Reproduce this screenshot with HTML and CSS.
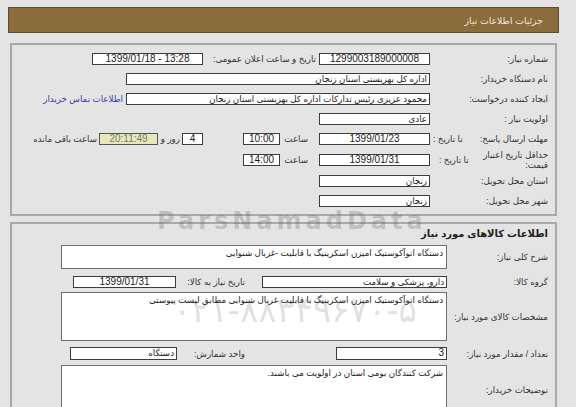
FILE: index.html
```html
<!DOCTYPE html>
<html lang="fa" dir="rtl">
<head>
<meta charset="utf-8">
<title>جزئیات اطلاعات نیاز</title>
<link rel="stylesheet" href="styles.css">
</head>
<body>
<div class="header">جزئیات اطلاعات نیاز</div>

<div class="panel p1">
  <div class="row">
    <div class="lbl">شماره نیاز:</div>
    <div class="box w111 c num">1299003189000008</div>
    <div class="lbl2">تاریخ و ساعت اعلان عمومی:</div>
    <div class="box w111 c num" dir="ltr">1399/01/18 - 13:28</div>
  </div>
  <div class="row">
    <div class="lbl">نام دستگاه خریدار:</div>
    <div class="box w304">اداره کل بهزیستی استان زنجان</div>
  </div>
  <div class="row">
    <div class="lbl">ایجاد کننده درخواست:</div>
    <div class="box w304">محمود  عزیزی رئیس تدارکات اداره کل بهزیستی استان زنجان</div>
    <a class="link" href="#">اطلاعات تماس خریدار</a>
  </div>
  <div class="row">
    <div class="lbl">اولویت نیاز :</div>
    <div class="box w111">عادی</div>
  </div>
  <div class="row">
    <div class="lbl split"><span>مهلت ارسال پاسخ:</span><span>تا تاریخ :</span></div>
    <div class="box w111 c num">1399/01/23</div>
    <div class="cell sa">ساعت</div>
    <div class="box w37 c num">10:00</div>
    <div class="cell gap40"></div>
    <div class="box w21 c num">4</div>
    <div class="cell rz">روز و</div>
    <div class="box timer c num">20:11:49</div>
    <div class="cell rem">ساعت باقی مانده</div>
  </div>
  <div class="row tall">
    <div class="lbl split"><span class="two">حداقل تاریخ اعتبار<br>قیمت:</span><span class="tt">تا تاریخ :</span></div>
    <div class="box w111 c num">1399/01/31</div>
    <div class="cell sa">ساعت</div>
    <div class="box w37 c num">14:00</div>
  </div>
  <div class="row">
    <div class="lbl">استان محل تحویل:</div>
    <div class="box w111">زنجان</div>
  </div>
  <div class="row">
    <div class="lbl">شهر محل تحویل:</div>
    <div class="box w111">زنجان</div>
  </div>
</div>

<div class="panel p2">
  <div class="heading">اطلاعات کالاهای مورد نیاز</div>
  <div class="row2 r-desc">
    <div class="lbl">شرح کلی نیاز:</div>
    <div class="box area h24">دستگاه اتوآکوستیک امیزن اسکرینیگ با قابلیت -غربال شنوایی</div>
  </div>
  <div class="row2 r-group">
    <div class="lbl">گروه کالا:</div>
    <div class="box w185">دارو، پزشکی و سلامت</div>
    <div class="cell need">تاریخ نیاز به کالا:</div>
    <div class="box w103 c num">1399/01/31</div>
  </div>
  <div class="row2 r-spec">
    <div class="lbl">مشخصات کالای مورد نیاز:</div>
    <div class="box area h49">دستگاه اتوآکوستیک امیزن اسکرینیگ با قابلیت غربال شنوایی  مطابق لیست پیوستی</div>
  </div>
  <div class="row2 r-qty">
    <div class="lbl">تعداد / مقدار مورد نیاز:</div>
    <div class="box w111 num">3</div>
    <div class="cell unit">واحد شمارش:</div>
    <div class="box w107">دستگاه</div>
  </div>
  <div class="row2 r-note">
    <div class="lbl">توضیحات خریدار:</div>
    <div class="box area h50">شرکت کنندگان بومی استان در اولویت می باشند.</div>
  </div>
</div>

<div class="wm wm-name" dir="ltr">ParsNamadData</div>
<div class="wm wm-tel" dir="ltr">۰۲۱-۸۸۳۴۹۶۷۰-۵</div>
</body>
</html>
```

FILE: styles.css
```css
html, body {
  margin: 0;
  height: 100%;
}
body {
  direction: rtl;
  padding: 7px 17px 0 8px;
  background: #e4e4e4;
  font-family: "Liberation Sans", "DejaVu Sans", sans-serif;
  font-size: 8.7px;
  color: #222;
  overflow: hidden;
}
.header {
  height: 24px;
  line-height: 26px;
  border: 1px solid #5e4c30;
  background: #8c6b3d;
  color: #f3eadb;
  padding-right: 15px;
  font-size: 9.3px;
}
.panel {
  margin: 0 2px;
  border: 2px solid #a9a9a9;
  background: #e4e4e4;
}
.p1 {
  margin-top: 10px;
  padding: 4px 7px 3px 0;
}
.p2 {
  margin-top: 6px;
  padding: 4px 7px 0 0;
  height: 200px;
}
.row {
  display: flex;
  align-items: center;
  height: 20px;
}
.row.tall {
  height: 22px;
}
.lbl {
  width: 118px;
  flex: none;
  color: #333;
  white-space: nowrap;
}
.split {
  display: flex;
  justify-content: space-between;
  align-items: center;
  padding-left: 3px;
  box-sizing: border-box;
}
.two {
  line-height: 10px;
}
.tt {
  margin-left: 6px;
}
.box {
  flex: none;
  box-sizing: border-box;
  height: 12px;
  line-height: 10px;
  border: 1px solid #3c3c3c;
  background: #fff;
  padding: 0 2px;
  white-space: nowrap;
  overflow: hidden;
  color: #1a1a1a;
}
.num { font-size: 10px; }
.c { text-align: center; }
.w111 { width: 111px; }
.w304 { width: 304px; }
.w37 { width: 37px; }
.w21 { width: 21px; }
.w185 { width: 185px; }
.w103 { width: 103px; }
.w107 { width: 107px; }
.lbl2 {
  width: 113px;
  margin-right: 3px;
  color: #333;
  white-space: nowrap;
}
.link {
  margin-right: 3px;
  color: #3b3ba6;
  text-decoration: none;
  white-space: nowrap;
}
.cell {
  flex: none;
  box-sizing: border-box;
  white-space: nowrap;
  color: #333;
}
.sa { width: 39px; padding-right: 11px; }
.gap40 { width: 40px; }
.rz { width: 24px; padding-right: 2px; }
.timer {
  width: 59px;
  background: #e9e7bd;
  color: #7a7a62;
  border-color: #555;
}
.rem { padding-right: 2px; }

.heading {
  height: 12px;
  line-height: 12px;
  font-weight: bold;
  font-size: 10px;
  color: #222;
}
.row2 {
  display: flex;
  align-items: center;
}
.row2 .lbl { width: 101px; }
.r-desc { margin-top: 5px; }
.r-group { margin-top: 7px; }
.r-spec { margin-top: 4px; }
.r-qty { margin-top: 6px; }
.r-note { margin-top: 5px; }
.area {
  width: 386px;
  border-color: #6d6d6d;
  padding: 2px 3px;
  line-height: 11px;
  white-space: normal;
}
.h24 { height: 24px; }
.h49 { height: 49px; }
.h50 { height: 50px; }
.r-qty .box { height: 13px; }
.need { width: 86px; padding-right: 17px; }
.unit { width: 159px; padding-right: 91px; }

.wm {
  position: absolute;
  pointer-events: none;
  white-space: nowrap;
  color: rgba(100, 100, 100, 0.28);
}
.wm-name {
  left: 157px;
  top: 207px;
  font-size: 24px;
  font-weight: bold;
  letter-spacing: 4px;
  font-family: "DejaVu Sans", sans-serif;
}
.wm-tel {
  left: 173px;
  top: 290px;
  font-size: 34px;
  letter-spacing: -2px;
  font-family: "DejaVu Sans", sans-serif;
  color: rgba(100, 100, 100, 0.2);
}
```
